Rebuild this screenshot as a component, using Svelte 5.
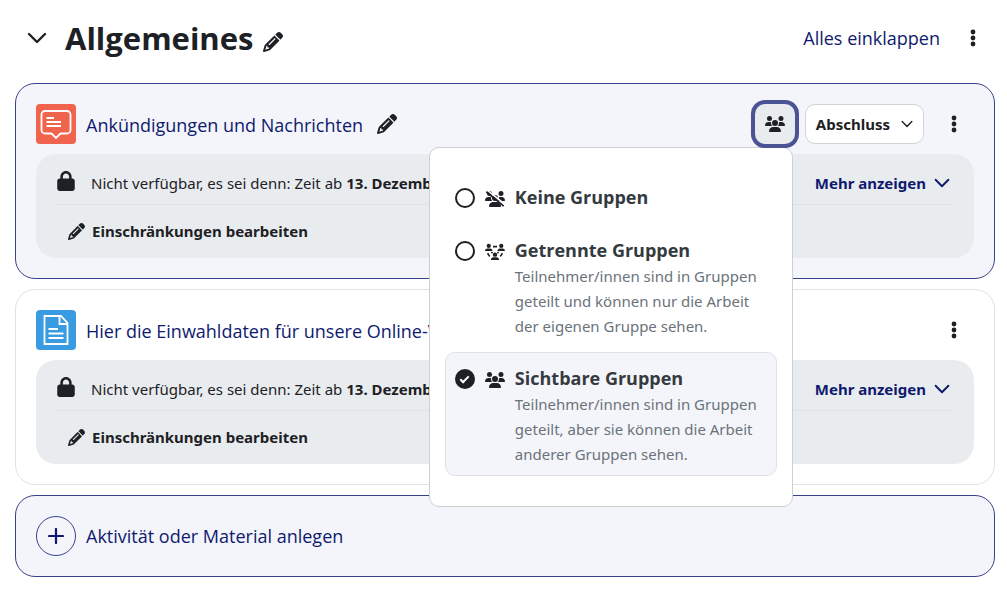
<script lang="ts">
  let open = $state(true);
  let groupMode = $state('visible');

  const modes = [
    { id: 'none', label: 'Keine Gruppen', text: '' },
    {
      id: 'separate',
      label: 'Getrennte Gruppen',
      text: 'Teilnehmer/innen sind in Gruppen geteilt und können nur die Arbeit der eigenen Gruppe sehen.',
    },
    {
      id: 'visible',
      label: 'Sichtbare Gruppen',
      text: 'Teilnehmer/innen sind in Gruppen geteilt, aber sie können die Arbeit anderer Gruppen sehen.',
    },
  ];

  const activities = [
    { type: 'forum', title: 'Ankündigungen und Nachrichten', selected: true, date: '13. Dezember' },
    { type: 'page', title: 'Hier die Einwahldaten für unsere Online-Veranstaltung', selected: false, date: '13. Dezember' },
  ];
</script>

{#snippet pencil()}
  <svg class="pencil" viewBox="0 0 512 512" aria-hidden="true">
    <path d="M410.3 231l11.3-11.3-33.9-33.9-62.1-62.1L291.7 89.8l-11.3 11.3-22.6 22.6L58.6 322.9c-10.4 10.4-18 23.3-22.2 37.4L1 480.7c-2.5 8.4-.2 17.5 6.1 23.7s15.3 8.5 23.7 6.1l120.3-35.4c14.1-4.2 27-11.8 37.4-22.2L387.7 253.7 410.3 231zM160 399.4l-9.1 22.7c-4 3.1-8.5 5.4-13.3 6.9L59.4 452l23-78.1c1.4-4.9 3.8-9.4 6.9-13.3l22.7-9.1v32c0 8.8 7.2 16 16 16h32zM362.7 18.7L348.3 33.2 325.7 55.8 314.3 67.1l33.9 33.9 62.1 62.1 33.9 33.9 11.3-11.3 22.6-22.6 14.5-14.5c25-25 25-65.5 0-90.5L453.3 18.7c-25-25-65.5-25-90.5 0zm-47.4 168l-144 144c-6.2 6.2-16.4 6.2-22.6 0s-6.2-16.4 0-22.6l144-144c6.2-6.2 16.4-6.2 22.6 0s6.2 16.4 0 22.6z" />
  </svg>
{/snippet}

{#snippet chevron()}
  <svg class="chevron" viewBox="0 0 20 20" aria-hidden="true"><path d="M2 6l8 8 8-8" /></svg>
{/snippet}

{#snippet kebab(label: string)}
  <button type="button" class="kebab" aria-label={label}>
    <svg viewBox="0 0 6 18" aria-hidden="true">
      <circle cx="3" cy="3" r="2.4" /><circle cx="3" cy="9" r="2.4" /><circle cx="3" cy="15" r="2.4" />
    </svg>
  </button>
{/snippet}

{#snippet groupIcon(mode: string)}
  {#if mode === 'separate'}
    <svg class="groups" viewBox="0 0 640 512" aria-hidden="true">
      <circle cx="120" cy="60" r="68" />
      <circle cx="520" cy="60" r="68" />
      <path d="M0 226c0-50 34-80 76-80h88c42 0 76 30 76 80zM400 226c0-50 34-80 76-80h88c42 0 76 30 76 80z" />
      <circle cx="320" cy="340" r="70" />
      <path d="M190 512c0-54 34-86 80-86h100c46 0 80 32 80 86z" />
      <path class="link" d="M256 84h128M90 290q12 60 62 104M550 290q-12 60-62 104M206 256l36 34M434 256l-36 34" />
    </svg>
  {:else}
    <svg class="groups" viewBox="0 0 640 512" aria-hidden="true">
      <path d="M144 0a80 80 0 1 1 0 160A80 80 0 1 1 144 0zM512 0a80 80 0 1 1 0 160A80 80 0 1 1 512 0zM0 298.7C0 239.8 47.8 192 106.7 192h42.7c15.9 0 31 3.5 44.6 9.7c-1.3 7.2-1.9 14.7-1.9 22.3c0 38.2 16.8 72.5 43.3 96H21.3C9.6 320 0 310.4 0 298.7zM405.3 320c26-23.5 42.6-57.8 42.6-96c0-7.6-.7-15-1.9-22.3c13.6-6.3 28.7-9.7 44.6-9.7h42.7C592.2 192 640 239.8 640 298.7c0 11.8-9.6 21.3-21.3 21.3H405.3zM224 224a96 96 0 1 1 192 0 96 96 0 1 1-192 0zM128 485.3C128 411.7 187.7 352 261.3 352H378.7C452.3 352 512 411.7 512 485.3c0 14.7-11.9 26.7-26.7 26.7H154.7c-14.7 0-26.7-11.9-26.7-26.7z" />
      {#if mode === 'none'}
        <path class="slash-gap" d="M80 -20L640 430" />
        <path class="slash" d="M40 24L600 484" />
      {/if}
    </svg>
  {/if}
{/snippet}

<main>
  <header class="section-head">
    <button type="button" class="toggle" aria-label="Abschnitt einklappen">{@render chevron()}</button>
    <h2>Allgemeines</h2>
    <button type="button" class="edit edit-section" aria-label="Abschnitt umbenennen">{@render pencil()}</button>
    <a class="collapse-all" href="#alle">Alles einklappen</a>
    {@render kebab('Abschnitt bearbeiten')}
  </header>

  <div class="activities">
    {#each activities as activity}
      <section class="card" class:selected={activity.selected}>
        <div class="card-head">
          <span class="badge {activity.type}">
            {#if activity.type === 'forum'}
              <svg viewBox="0 0 40 40" aria-hidden="true">
                <path d="M9 7h22a3.5 3.5 0 0 1 3.5 3.5v15.5a3.5 3.5 0 0 1-3.5 3.5h-6.5L20 34l-4.5-4.5H9A3.5 3.5 0 0 1 5.5 26V10.5A3.5 3.5 0 0 1 9 7z" />
                <path d="M10.5 14h7.5M10.5 18h14.5M10.5 22h14.5" />
              </svg>
            {:else}
              <svg viewBox="0 0 40 40" aria-hidden="true">
                <path d="M8.5 6h16.5l6.5 7v21h-23z" />
                <path d="M23.5 6v8h8" />
                <path d="M12.5 19h9.5M12.5 23.5h15M12.5 28h15" />
              </svg>
            {/if}
          </span>
          <a class="title" href="#{activity.type}">{activity.title}</a>
          {#if activity.selected}
            <button type="button" class="edit" aria-label="Titel bearbeiten">{@render pencil()}</button>
          {/if}
          <div class="actions">
            {#if activity.selected}
              <div class="group-menu">
                <button
                  type="button"
                  class="group-button"
                  class:open
                  aria-label="Gruppenmodus"
                  aria-expanded={open}
                  onclick={() => (open = !open)}
                >
                  {@render groupIcon('visible')}
                </button>
                {#if open}
                  <div class="popover" role="radiogroup" aria-label="Gruppenmodus">
                    {#each modes as mode}
                      <label class="option" class:active={groupMode === mode.id}>
                        <input type="radio" name="groupmode" value={mode.id} bind:group={groupMode} />
                        {@render groupIcon(mode.id)}
                        <span class="option-text">
                          <strong>{mode.label}</strong>
                          {#if mode.text}<small>{mode.text}</small>{/if}
                        </span>
                      </label>
                    {/each}
                  </div>
                {/if}
              </div>
              <button type="button" class="completion">Abschluss {@render chevron()}</button>
            {/if}
            {@render kebab('Aktivität bearbeiten')}
          </div>
        </div>

        <div class="restriction">
          <div class="condition">
            <svg class="lock" viewBox="0 0 448 512" aria-hidden="true">
              <path d="M144 144v48H304V144c0-44.2-35.8-80-80-80s-80 35.8-80 80zM80 192V144C80 64.5 144.5 0 224 0s144 64.5 144 144v48h16c35.3 0 64 28.7 64 64V448c0 35.3-28.7 64-64 64H64c-35.3 0-64-28.7-64-64V256c0-35.3 28.7-64 64-64H80z" />
            </svg>
            <span>Nicht verfügbar, es sei denn: Zeit ab <b>{activity.date}</b></span>
            <button type="button" class="more">Mehr anzeigen {@render chevron()}</button>
          </div>
          <a class="edit-restriction" href="#voraussetzungen">{@render pencil()} Einschränkungen bearbeiten</a>
        </div>
      </section>
    {/each}

    <button type="button" class="card selected add">
      <span class="plus">
        <svg viewBox="0 0 16 16" aria-hidden="true"><path d="M8 1v14M1 8h14" /></svg>
      </span>
      Aktivität oder Material anlegen
    </button>
  </div>
</main>

<style>
  :global(body) {
    background: #fff;
  }

  main {
    --ink: #1d2125;
    --link: #0f1a6e;
    --line: #dee2e6;
    --heading-font: "Open Sans", "Noto Sans", sans-serif;
    padding: 0 12px 20px 15px;
    font-family: "Noto Sans", "Open Sans", sans-serif;
    font-size: 15px;
    line-height: 24px;
    color: var(--ink);
  }

  button {
    padding: 0;
    border: 0;
    background: none;
    font: inherit;
    color: inherit;
    cursor: pointer;
  }

  a {
    color: var(--link);
    text-decoration: none;
  }

  svg {
    display: block;
    flex: none;
    fill: currentColor;
  }

  .chevron {
    width: 20px;
    height: 20px;
    fill: none;
    stroke: currentColor;
    stroke-width: 2.4;
    stroke-linecap: round;
    stroke-linejoin: round;
  }

  .section-head {
    display: flex;
    align-items: center;
    height: 75px;
    padding: 0 2px 8px 0;
  }

  .toggle {
    padding: 0 18px 0 12px;
  }

  h2,
  strong,
  .title,
  .add,
  .collapse-all {
    font-family: var(--heading-font);
    font-size: 18px;
  }

  h2 {
    margin: 0;
    font-size: 31px;
    line-height: 40px;
    font-weight: 700;
  }

  .edit {
    margin-left: 14px;
  }

  .edit-section {
    margin: 8px 0 0 10px;
  }

  .edit .pencil {
    width: 20px;
    height: 20px;
  }

  .collapse-all {
    margin-left: auto;
    margin-right: 13px;
  }

  .kebab {
    display: flex;
    align-items: center;
    justify-content: center;
    width: 40px;
    height: 40px;
  }

  .kebab svg {
    width: 6px;
    height: 18px;
  }

  .activities {
    display: flex;
    flex-direction: column;
    gap: 10px;
  }

  .card {
    padding: 20px;
    border: 1px solid var(--line);
    border-radius: 20px;
    background: #fff;
  }

  .card.selected {
    border-color: #36428a;
    background: #f4f5fa;
  }

  .card-head {
    display: flex;
    align-items: center;
    height: 40px;
    margin-bottom: 10px;
  }

  .title {
    padding-top: 2px;
    white-space: nowrap;
  }

  .badge {
    width: 40px;
    height: 40px;
    margin-right: 10px;
    border-radius: 4px;
  }

  .badge svg {
    fill: none;
    stroke: #fff;
    stroke-width: 1.8;
  }

  .forum {
    background: #f0634c;
  }

  .page {
    background: #399be2;
  }

  .actions {
    display: flex;
    gap: 10px;
    margin-left: auto;
  }

  .group-menu {
    position: relative;
  }

  .group-button {
    display: flex;
    align-items: center;
    justify-content: center;
    position: relative;
    width: 40px;
    height: 40px;
    border-radius: 10px;
    background: #e9ecef;
    z-index: 3;
  }

  .group-button.open {
    box-shadow: 0 0 0 4px #4a5393;
  }

  .groups {
    width: 20px;
    height: 16px;
    overflow: visible;
  }

  .link,
  .slash,
  .slash-gap {
    fill: none;
    stroke: currentColor;
    stroke-width: 52;
  }

  .slash-gap {
    stroke: #fff;
  }

  .completion {
    display: flex;
    align-items: center;
    gap: 11px;
    height: 40px;
    padding: 0 10px;
    border: 1px solid #ced4da;
    border-radius: 10px;
    background: #fff;
    font-weight: 700;
  }

  .completion .chevron {
    width: 12px;
    height: 12px;
  }

  .popover {
    position: absolute;
    top: 43px;
    right: 2px;
    z-index: 2;
    display: flex;
    flex-direction: column;
    gap: 4px;
    box-sizing: border-box;
    width: 364px;
    padding: 23px 15px 30px;
    border: 1px solid #cdcfd2;
    border-radius: 10px;
    background: #fff;
  }

  .option {
    display: flex;
    gap: 10px;
    padding: 12px 9px 8px;
    border: 1px solid transparent;
    border-radius: 10px;
    cursor: pointer;
  }

  .option.active {
    border-color: var(--line);
    background: #f4f5fa;
  }

  .option input {
    display: grid;
    place-items: center;
    flex: none;
    appearance: none;
    width: 20px;
    height: 20px;
    margin: 4px 0 0;
    border: 2px solid var(--ink);
    border-radius: 50%;
  }

  .option input:checked {
    background: var(--ink);
  }

  .option input:checked::after {
    content: "";
    width: 7px;
    height: 3px;
    margin-bottom: 2px;
    border: solid #fff;
    border-width: 0 0 2px 2px;
    transform: rotate(-45deg);
  }

  .option .groups {
    margin-top: 7px;
  }

  .option-text {
    display: block;
  }

  strong,
  small {
    display: block;
  }

  strong {
    line-height: 27px;
    color: #343a40;
  }

  small {
    font-size: 15px;
    line-height: 25px;
    color: #6a737b;
  }

  .restriction {
    padding: 0 20px;
    border-radius: 20px;
    background: #e9ecef;
  }

  .condition {
    display: flex;
    align-items: center;
    padding: 17px 0 9px;
    border-bottom: 1px solid var(--line);
    white-space: nowrap;
  }

  .lock {
    width: 18px;
    height: 20px;
    margin: 0 16px 4px 1px;
  }

  .more {
    display: flex;
    align-items: center;
    gap: 8px;
    margin-left: auto;
    padding-right: 4px;
    font-weight: 700;
    color: var(--link);
  }

  .more .chevron {
    width: 16px;
    height: 16px;
  }

  .edit-restriction {
    display: flex;
    align-items: center;
    gap: 7px;
    width: fit-content;
    padding: 14px 12px 15px;
    font-weight: 700;
    color: var(--ink);
  }

  .edit-restriction .pencil {
    width: 17px;
    height: 17px;
  }

  .add {
    display: flex;
    align-items: center;
    gap: 10px;
    color: var(--link);
  }

  .plus {
    display: grid;
    place-items: center;
    box-sizing: border-box;
    width: 40px;
    height: 40px;
    border: 1px solid #36428a;
    border-radius: 50%;
  }

  .plus svg {
    width: 16px;
    height: 16px;
    stroke: currentColor;
    stroke-width: 2.2;
    stroke-linecap: round;
  }
</style>
